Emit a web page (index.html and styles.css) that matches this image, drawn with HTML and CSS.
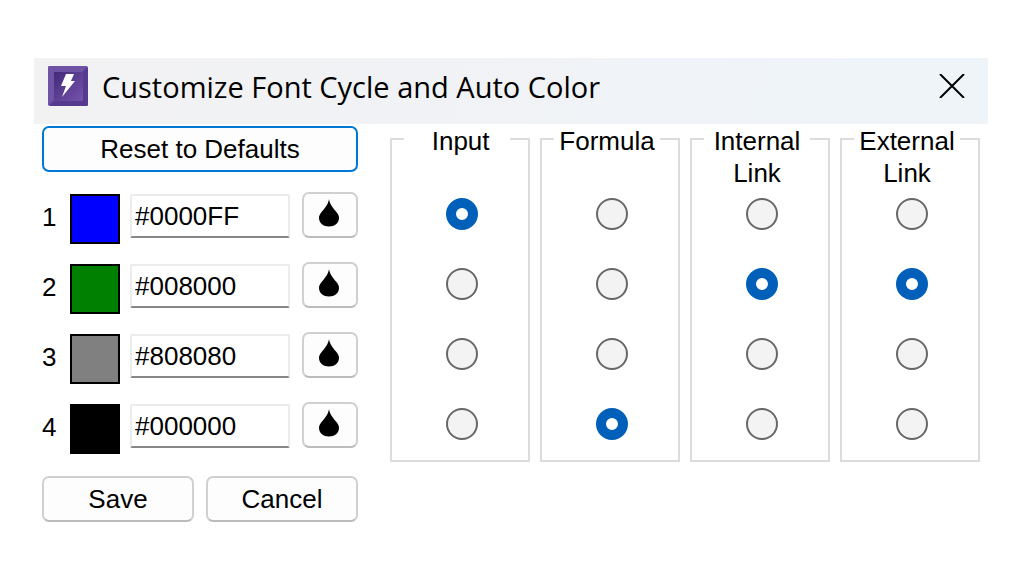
FILE: index.html
```html
<!DOCTYPE html>
<html lang="en">
<head>
<meta charset="utf-8">
<meta name="viewport" content="width=device-width, initial-scale=1">
<title>Customize Font Cycle and Auto Color</title>
<link rel="stylesheet" href="styles.css">
</head>
<body>
<svg class="defs" width="0" height="0" aria-hidden="true">
  <symbol id="drop" viewBox="0 0 22 28">
    <path d="M11 0C11.600 5 15 9 18 12.500C20.500 15.500 21 17 21 19C21 24 16.500 27.500 11 27.500S1 24 1 19C1 17 1.500 15.500 4 12.500C7 9 10.400 5 11 0Z"/>
  </symbol>
</svg>
<form class="dialog" role="dialog" aria-labelledby="title">
  <header class="titlebar">
    <svg class="app-icon" viewBox="0 0 40 40" aria-hidden="true">
      <defs>
        <linearGradient id="face" x1="0" y1="0" x2="1" y2="1">
          <stop offset="0" stop-color="#432a78"/>
          <stop offset="1" stop-color="#7654ad"/>
        </linearGradient>
      </defs>
      <rect width="40" height="40" rx="2" fill="#60449b"/>
      <path d="M1 0H39L34 6H6V34L0 39V1Z" fill="#6f54a6"/>
      <path d="M40 2V39L39 40H2L6 35H35V6Z" fill="#563a90"/>
      <rect x="6" y="6" width="29" height="29" fill="url(#face)"/>
      <path d="M18 8H26L23 15H27L14 31L18 20H13Z" fill="#fff"/>
    </svg>
    <h1 class="title" id="title">Customize Font Cycle and Auto Color</h1>
    <button class="close" type="button" aria-label="Close">
      <svg viewBox="0 0 24 24" aria-hidden="true"><path d="M0 0L24 24M24 0L0 24"/></svg>
    </button>
  </header>
  <div class="content">
    <div class="colors">
      <button class="button button-focus" type="reset">Reset to Defaults</button>
      <div class="rows">
        <div class="row">
          <label class="number" for="color1">1</label>
          <span class="swatch blue"></span>
          <input class="hex" id="color1" type="text" value="#0000FF">
          <button class="button" type="button" aria-label="Pick color 1"><svg class="drop"><use href="#drop"/></svg></button>
        </div>
        <div class="row">
          <label class="number" for="color2">2</label>
          <span class="swatch green"></span>
          <input class="hex" id="color2" type="text" value="#008000">
          <button class="button" type="button" aria-label="Pick color 2"><svg class="drop"><use href="#drop"/></svg></button>
        </div>
        <div class="row">
          <label class="number" for="color3">3</label>
          <span class="swatch gray"></span>
          <input class="hex" id="color3" type="text" value="#808080">
          <button class="button" type="button" aria-label="Pick color 3"><svg class="drop"><use href="#drop"/></svg></button>
        </div>
        <div class="row">
          <label class="number" for="color4">4</label>
          <span class="swatch black"></span>
          <input class="hex" id="color4" type="text" value="#000000">
          <button class="button" type="button" aria-label="Pick color 4"><svg class="drop"><use href="#drop"/></svg></button>
        </div>
      </div>
      <div class="actions">
        <button class="button" type="submit">Save</button>
        <button class="button" type="button">Cancel</button>
      </div>
    </div>
    <div class="groups">
      <fieldset class="group">
        <legend class="legend">&nbsp;Input</legend>
        <div class="options">
          <input class="radio" type="radio" name="input" aria-label="Color 1" checked>
          <input class="radio" type="radio" name="input" aria-label="Color 2">
          <input class="radio" type="radio" name="input" aria-label="Color 3">
          <input class="radio" type="radio" name="input" aria-label="Color 4">
        </div>
      </fieldset>
      <fieldset class="group">
        <legend class="legend">Formula</legend>
        <div class="options">
          <input class="radio" type="radio" name="formula" aria-label="Color 1">
          <input class="radio" type="radio" name="formula" aria-label="Color 2">
          <input class="radio" type="radio" name="formula" aria-label="Color 3">
          <input class="radio" type="radio" name="formula" aria-label="Color 4" checked>
        </div>
      </fieldset>
      <fieldset class="group">
        <legend class="legend">Internal<br>Link</legend>
        <div class="options">
          <input class="radio" type="radio" name="internal" aria-label="Color 1">
          <input class="radio" type="radio" name="internal" aria-label="Color 2" checked>
          <input class="radio" type="radio" name="internal" aria-label="Color 3">
          <input class="radio" type="radio" name="internal" aria-label="Color 4">
        </div>
      </fieldset>
      <fieldset class="group">
        <legend class="legend">External<br>Link</legend>
        <div class="options">
          <input class="radio" type="radio" name="external" aria-label="Color 1">
          <input class="radio" type="radio" name="external" aria-label="Color 2" checked>
          <input class="radio" type="radio" name="external" aria-label="Color 3">
          <input class="radio" type="radio" name="external" aria-label="Color 4">
        </div>
      </fieldset>
    </div>
  </div>
</form>
</body>
</html>
```

FILE: styles.css
```css
* {
  box-sizing: border-box;
}

body {
  margin: 0;
  padding: 58px 36px 0 34px;
  background: #fff;
  color: #000;
  font: 26px/32px "Liberation Sans", Arial, sans-serif;
}

button,
input {
  margin: 0;
  color: inherit;
  font: inherit;
}

.defs {
  position: absolute;
}

.titlebar {
  display: flex;
  align-items: center;
  height: 66px;
  padding: 0 22px 10px 14px;
  background: linear-gradient(100deg, #f2f2f3 0%, #f1f2f5 40%, #eff4f9 85%);
}

.app-icon {
  flex: none;
  width: 40px;
  height: 40px;
}

.title {
  flex: 1;
  margin: 2px 0 0 14px;
  font: 400 29px/36px "Open Sans", "Segoe UI", sans-serif;
  white-space: nowrap;
}

.close {
  display: flex;
  padding: 0;
  border: 0;
  background: none;
}

.close svg {
  width: 28px;
  height: 24px;
  fill: none;
  stroke: #000;
  stroke-width: 2;
}

.content {
  display: grid;
  grid-template-columns: 316px minmax(0, 1fr);
  align-items: start;
  gap: 32px;
  padding: 1px 8px 0;
}

.colors {
  display: grid;
  padding-top: 1px;
}

.button {
  display: flex;
  align-items: center;
  justify-content: center;
  height: 46px;
  padding: 0;
  border: 2px solid #d0d0d0;
  border-bottom-color: #bcbcbc;
  border-radius: 7px;
  background: #fdfdfd;
}

.button-focus {
  border-color: #0078d4;
}

.rows {
  display: grid;
  gap: 18px;
  margin: 20px 0 22px;
}

.row {
  display: grid;
  grid-template-columns: 28px 50px minmax(0, 1fr) 56px;
  align-items: start;
  height: 52px;
}

.number {
  line-height: 50px;
}

.swatch {
  height: 50px;
  margin-top: 2px;
  border: 2px solid #000;
}

.blue {
  background: #00f;
}

.green {
  background: #008000;
}

.gray {
  background: #808080;
}

.black {
  background: #000;
}

.hex {
  min-width: 0;
  height: 44px;
  margin: 2px 12px 0 10px;
  padding: 0 3px;
  border: 2px solid #ececec;
  border-bottom-color: #868686;
  border-radius: 2px;
  background: #fff;
}

.drop {
  width: 22px;
  height: 28px;
  margin: 0 2px 4px 0;
}

.actions {
  display: grid;
  grid-template-columns: 1fr 1fr;
  gap: 12px;
}

.groups {
  display: grid;
  grid-template-columns: repeat(4, minmax(0, 1fr));
  gap: 10px;
}

.group {
  min-width: 0;
  margin: 0;
  padding: 0 16px 20px 10px;
  border: 2px solid #dcdcdc;
}

.legend {
  width: 106px;
  height: 28px;
  padding: 0;
  text-align: center;
}

.options {
  display: grid;
  justify-content: center;
  gap: 38px;
  padding: 45px 0 0 10px;
}

.radio {
  appearance: none;
  width: 32px;
  height: 32px;
  border: 2px solid #686868;
  border-radius: 50%;
  background: #f3f3f3;
}

.radio:checked {
  border: 10px solid #005fb8;
  background: #fff;
}
```
